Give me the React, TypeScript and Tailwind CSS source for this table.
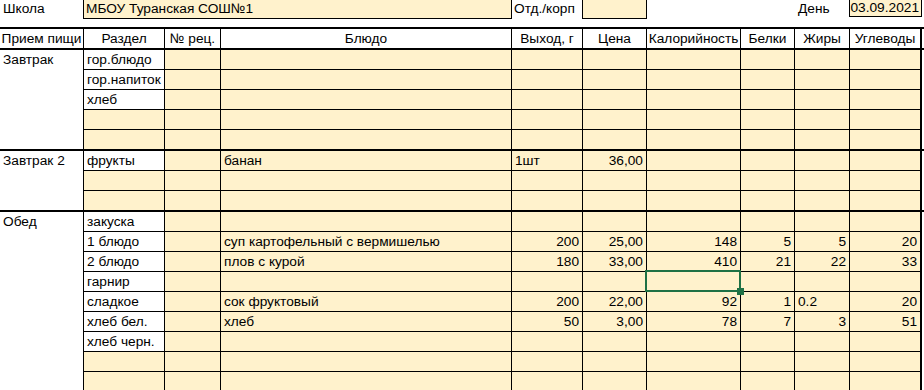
import clsx from "clsx";

type Row = string[];

// widths of Раздел .. Углеводы (Прием пищи is 84px on its own)
const GRID =
  "grid grid-cols-[81px_56px_291px_71px_64px_94px_54px_55px_72px]";

const HEAD = [
  "Раздел",
  "№ рец.",
  "Блюдо",
  "Выход, г",
  "Цена",
  "Калорийность",
  "Белки",
  "Жиры",
  "Углеводы",
];

const sections: { name: string; rows: Row[]; selected?: number }[] = [
  {
    name: "Завтрак",
    rows: [["гор.блюдо"], ["гор.напиток"], ["хлеб"], [], []],
  },
  {
    name: "Завтрак 2",
    rows: [["фрукты", "", "банан", "1шт", "36,00"], [], []],
  },
  {
    name: "Обед",
    selected: 3,
    rows: [
      ["закуска"],
      ["1 блюдо", "", "суп картофельный с вермишелью", "200", "25,00", "148", "5", "5", "20"],
      ["2 блюдо", "", "плов с курой", "180", "33,00", "410", "21", "22", "33"],
      ["гарнир"],
      ["сладкое", "", "сок фруктовый", "200", "22,00", "92", "1", "0.2", "20"],
      ["хлеб бел.", "", "хлеб", "50", "3,00", "78", "7", "3", "51"],
      ["хлеб черн."],
      [],
      [],
      [],
    ],
  },
];

// Excel keeps real numbers to the right, text to the left
const isNum = (v: string) => /^\d+(,\d+)?$/.test(v);

const DataRow = ({ row, last, selected }: { row: Row; last: boolean; selected: boolean }) => (
  <div className={clsx(GRID, last ? "h-[19px]" : "h-5 border-b border-black")}>
    {Array.from({ length: 9 }).map((_, i) => {
      const v = row[i] ?? "";
      return (
        <div
          key={i}
          className={clsx(
            "relative whitespace-nowrap px-[3px] leading-[19px]",
            i === 8 ? "border-r-2" : "border-r",
            "border-black",
            i === 0 && v ? "bg-white" : "bg-[#fff2cc]",
            isNum(v) ? "text-right" : "text-left"
          )}
        >
          {v}
          {selected && i === 5 && (
            <div className="absolute -left-[2px] -top-[2px] -right-[1px] -bottom-[1px] z-10 border-2 border-[#1e7145]">
              <div className="absolute -right-[5px] -bottom-[5px] h-[7px] w-[7px] bg-[#1e7145]" />
            </div>
          )}
        </div>
      );
    })}
  </div>
);

export default function App() {
  return (
    <div className="h-[390px] w-[924px] overflow-hidden bg-white font-['Liberation_Sans',Arial,sans-serif] text-[13.7px] text-black">
      {/* top line: school, building, day */}
      <div className="flex h-[19px] leading-[18px]">
        <div className="w-[83px] pl-[3px]">Школа</div>
        <div className="w-[429px] border-x border-b border-black bg-[#fff2cc] pl-[2px]">
          МБОУ Туранская СОШ№1
        </div>
        <div className="w-[70px] pl-[2px]">Отд./корп</div>
        <div className="w-[65px] border-x border-b border-black bg-[#fff2cc]" />
        <div className="w-[149px]" />
        <div className="w-[53px] pl-[2px]">День</div>
        <div className="h-[17px] w-[73px] border-x border-b border-black bg-[#fff2cc] pr-[2px] text-right leading-[16px]">
          03.09.2021
        </div>
      </div>
      <div className="h-[8px]" />

      {/* header */}
      <div className="flex h-[23px] border-y-2 border-black bg-white">
        <div className="w-[84px] shrink-0 whitespace-nowrap border-r border-black text-center leading-[19px]">
          Прием пищи
        </div>
        <div className={GRID}>
          {HEAD.map((h, i) => (
            <div
              key={h}
              className={clsx(
                "whitespace-nowrap border-black text-center leading-[19px]",
                i === 8 ? "border-r-2" : "border-r"
              )}
            >
              {h}
            </div>
          ))}
        </div>
      </div>

      {sections.map((s) => (
        <div key={s.name} className="flex border-b-2 border-black">
          <div className="w-[84px] shrink-0 border-r border-black bg-white px-[3px] leading-[19px]">
            {s.name}
          </div>
          <div className="flex flex-col">
            {s.rows.map((r, idx) => (
              <DataRow
                key={idx}
                row={r}
                last={idx === s.rows.length - 1}
                selected={s.selected === idx}
              />
            ))}
          </div>
        </div>
      ))}
    </div>
  );
}
